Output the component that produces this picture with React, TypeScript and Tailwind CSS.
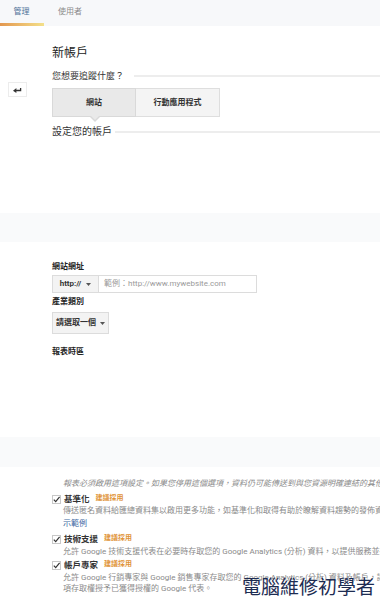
import React from "react";

function Check() {
  return (
    <svg width="9" height="9" viewBox="0 0 9 9" className="shrink-0">
      <rect x="0.5" y="0.5" width="8" height="8" fill="white" stroke="#c8c8c8" />
      <path d="M1.8 4.6 L3.7 6.6 L7.6 1.8" fill="none" stroke="#333" strokeWidth="1.2" />
    </svg>
  );
}

function Caret() {
  return (
    <svg width="5" height="3" viewBox="0 0 5 3" className="shrink-0">
      <path d="M0 0 H5 L2.5 3 Z" fill="#555" />
    </svg>
  );
}

export default function App() {
  return (
    <div className="relative w-[380px] h-[600px] overflow-hidden bg-white font-[Roboto,'Noto_Sans_CJK_TC',sans-serif] text-[#333]">
      {/* Tabs */}
      <div className="h-[26px] bg-[#f7f8fa] flex flex-col">
        <div className="h-[23px] flex items-center">
          <div className="w-[43px] text-center text-[8px] leading-[10px] text-[#4f7299]">管理</div>
          <div className="ml-[15px] text-[8px] leading-[10px] text-[#8a8a8a]">使用者</div>
        </div>
        <div className="h-[3px] w-[44px] bg-linear-to-r from-[#e2974f] to-[#f3e08a]" />
      </div>

      {/* Section 1 */}
      <div className="flex h-[187px]">
        <div className="w-[52px] shrink-0 pt-[56px] pl-[8px]">
          <div className="w-[19px] h-[15px] border border-[#ececec] flex items-center justify-center">
            <svg width="9" height="6" viewBox="0 0 9 6">
              <path d="M0 3.8 L3.4 1 L3.4 6 Z" fill="#333" />
              <path d="M3 3.5 H7.6 V1" fill="none" stroke="#333" strokeWidth="1.3" />
            </svg>
          </div>
        </div>
        <div className="flex-1 pt-[19px]">
          <div className="text-[12px] leading-[16px] text-[#222]">新帳戶</div>
          <div className="mt-[9px] flex items-center">
            <div className="text-[9px] leading-[12px] text-[#333] whitespace-nowrap">您想要追蹤什麼？</div>
            <div className="ml-[10px] flex-1 h-[2px] bg-[#ededed]" />
          </div>
          <div className="mt-[6px] flex">
            <div className="relative w-[84px] h-[29px] bg-[#e9e9e9] border border-[#d9d9d9] flex items-center justify-center text-[8px] font-bold text-[#333]">
              網站
              <div className="absolute left-[37px] top-[28px] w-0 h-0 border-l-[5px] border-r-[5px] border-t-[5px] border-l-transparent border-r-transparent border-t-[#d9d9d9]" />
              <div className="absolute left-[38px] top-[27px] w-0 h-0 border-l-[4px] border-r-[4px] border-t-[4px] border-l-transparent border-r-transparent border-t-[#e9e9e9]" />
            </div>
            <div className="w-[84px] h-[29px] bg-[#f4f4f4] border border-l-0 border-[#dedede] flex items-center justify-center text-[8px] font-bold text-[#333]">
              行動應用程式
            </div>
          </div>
          <div className="mt-[8px] flex items-center">
            <div className="text-[10px] leading-[14px] text-[#333] whitespace-nowrap">設定您的帳戶</div>
            <div className="ml-[3px] flex-1 h-[2px] bg-[#ededed]" />
          </div>
        </div>
      </div>

      {/* Band 1 */}
      <div className="h-[29px] bg-[#f9fafb]" />

      {/* Section 2 */}
      <div className="h-[195px] pl-[52px] pt-[20px]">
        <div className="text-[8px] leading-[10px] font-bold text-[#222]">網站網址</div>
        <div className="mt-[3px] flex h-[18px] w-[205px]">
          <div className="w-[47px] h-full bg-[#f3f3f3] border border-[#dcdcdc] flex items-center justify-center gap-[5px] text-[8px] text-[#333] font-bold">
            <span>http://</span>
            <Caret />
          </div>
          <div className="flex-1 h-full border border-l-0 border-[#dcdcdc] flex items-center pl-[5px] text-[8px] text-[#9a9a9a] whitespace-nowrap">
            範例：http://www.mywebsite.com
          </div>
        </div>
        <div className="mt-[4px] text-[8px] leading-[10px] font-bold text-[#222]">產業類別</div>
        <div className="mt-[5px] w-[57px] h-[22px] bg-[#f3f3f3] border border-[#dcdcdc] flex items-center justify-center gap-[4px] text-[8px] font-bold text-[#333]">
          <span>請選取一個</span>
          <Caret />
        </div>
        <div className="mt-[13px] text-[8px] leading-[10px] font-bold text-[#222]">報表時區</div>
      </div>

      {/* Band 2 */}
      <div className="h-[30px] bg-[#f9fafb]" />

      {/* Section 3 */}
      <div className="pt-[12px] whitespace-nowrap">
        <div className="pl-[63px] text-[8px] leading-[10px] italic text-[#8a8a8a]">
          報表必須啟用這項設定。如果您停用這個選項，資料仍可能傳送到與您資源明確連結的其他產品。
        </div>
        <div className="mt-[5px] pl-[52px] flex items-center h-[10px]">
          <Check />
          <span className="ml-[3px] text-[8.5px] leading-[10px] font-bold text-[#333]">基準化</span>
          <span className="ml-[6px] -mt-[3px] text-[7px] leading-[8px] font-bold text-[#e09236]">建議採用</span>
        </div>
        <div className="mt-[2px] pl-[63px] text-[8px] leading-[10px] text-[#8a8a8a]">
          傳送匿名資料給匯總資料集以啟用更多功能，如基準化和取得有助於瞭解資料趨勢的發佈資訊。
        </div>
        <div className="mt-[3px] pl-[63px] text-[8px] leading-[10px] text-[#3d68a3]">示範例</div>
        <div className="mt-[5px] pl-[52px] flex items-center h-[10px]">
          <Check />
          <span className="ml-[3px] text-[8.5px] leading-[10px] font-bold text-[#333]">技術支援</span>
          <span className="ml-[6px] -mt-[3px] text-[7px] leading-[8px] font-bold text-[#e09236]">建議採用</span>
        </div>
        <div className="mt-[3px] pl-[63px] text-[8px] leading-[10px] text-[#8a8a8a]">
          允許 Google 技術支援代表在必要時存取您的 Google Analytics (分析) 資料，以提供服務並找出技術問題的解決方案。
        </div>
        <div className="mt-[3px] pl-[52px] flex items-center h-[10px]">
          <Check />
          <span className="ml-[3px] text-[8.5px] leading-[10px] font-bold text-[#333]">帳戶專家</span>
          <span className="ml-[6px] -mt-[3px] text-[7px] leading-[8px] font-bold text-[#e09236]">建議採用</span>
        </div>
        <div className="mt-[3px] pl-[63px] text-[8px] leading-[10px] text-[#8a8a8a]">
          允許 Google 行銷專家與 Google 銷售專家存取您的 Google Analytics (分析) 資料及帳戶，讓他們找出可改善設定及分析的方法，並提供最佳化提示。
        </div>
        <div className="mt-[1px] pl-[63px] text-[8px] leading-[10px] text-[#8a8a8a]">
          項存取權授予已獲得授權的 Google 代表。
        </div>
      </div>

      {/* Watermark */}
      <div className="absolute left-[242px] top-[573px] text-[19px] leading-[25px] text-[#1d2c52] whitespace-nowrap font-['Noto_Sans_CJK_TC',sans-serif]">
        電腦維修初學者
      </div>
    </div>
  );
}
